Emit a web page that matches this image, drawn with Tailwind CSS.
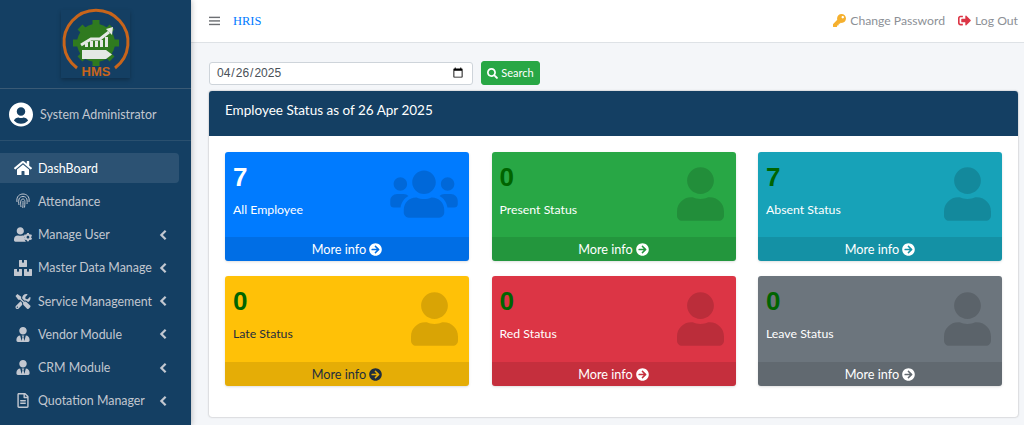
<!DOCTYPE html>
<html lang="en">

<head>
  <meta charset="UTF-8">
  <meta name="viewport" content="width=device-width, initial-scale=1.0">
  <title>HRIS</title>
  <script src="https://cdn.jsdelivr.net/npm/@tailwindcss/browser@4"></script>
</head>

<body class="bg-[#f4f6f9] text-[#212529] font-['Lato',sans-serif]">
  <!-- shared icons -->
  <svg class="hidden">
    <symbol id="i-user" viewBox="0 0 448 512"><path d="M224 256c70.7 0 128-57.3 128-128S294.7 0 224 0 96 57.3 96 128s57.3 128 128 128zm89.6 32h-16.7c-22.2 10.2-46.9 16-72.9 16s-50.6-5.8-72.9-16h-16.7C60.2 288 0 348.2 0 422.4V464c0 26.5 21.5 48 48 48h352c26.5 0 48-21.5 48-48v-41.6c0-74.2-60.2-134.4-134.4-134.4z"/></symbol>
    <symbol id="i-users" viewBox="0 0 640 512"><path d="M96 224c35.3 0 64-28.7 64-64s-28.7-64-64-64-64 28.7-64 64 28.7 64 64 64zm448 0c35.3 0 64-28.7 64-64s-28.7-64-64-64-64 28.7-64 64 28.7 64 64 64zm32 32h-64c-17.6 0-33.5 7.1-45.1 18.6 40.3 22.1 68.9 62 75.1 109.4h66c17.7 0 32-14.3 32-32v-32c0-35.3-28.7-64-64-64zm-256 0c61.9 0 112-50.1 112-112S381.9 32 320 32 208 82.1 208 144s50.1 112 112 112zm76.8 32h-8.3c-20.8 10-43.9 16-68.5 16s-47.6-6-68.5-16h-8.3C179.6 288 128 339.6 128 403.2V432c0 26.5 21.5 48 48 48h288c26.5 0 48-21.5 48-48v-28.8c0-63.6-51.6-115.2-115.2-115.2zm-223.7-13.4C161.5 263.1 145.6 256 128 256H64c-35.3 0-64 28.7-64 64v32c0 17.7 14.3 32 32 32h65.9c6.3-47.4 34.9-87.3 75.2-109.4z"/></symbol>
    <symbol id="i-arrow" viewBox="0 0 512 512"><path d="M256 8c137 0 248 111 248 248S393 504 256 504 8 393 8 256 119 8 256 8zm-28.9 143.6l75.5 72.4H120c-13.3 0-24 10.7-24 24v16c0 13.3 10.7 24 24 24h182.6l-75.5 72.4c-9.7 9.3-9.9 24.8-.4 34.3l11 10.9c9.4 9.4 24.6 9.4 33.9 0L404.3 273c9.4-9.4 9.4-24.6 0-33.9L271.6 106.3c-9.4-9.4-24.6-9.4-33.9 0l-11 10.9c-9.5 9.6-9.3 25.1.4 34.4z"/></symbol>
    <symbol id="i-tie" viewBox="0 0 448 512"><path d="M224 256c70.7 0 128-57.3 128-128S294.7 0 224 0 96 57.3 96 128s57.3 128 128 128zm95.8 32.6L272 480l-32-136 32-56h-96l32 56-32 136-47.8-191.4C56.9 292 0 350.3 0 422.4V464c0 26.5 21.5 48 48 48h352c26.5 0 48-21.5 48-48v-41.6c0-72.1-56.9-130.4-128.2-133.8z"/></symbol>
    <symbol id="i-left" viewBox="0 0 10 14"><path d="M7.5 2 L2.5 7 L7.5 12" fill="none" stroke="currentColor" stroke-width="2.6"/></symbol>
  </svg>

  <div class="flex h-[425px] overflow-hidden">
    <!-- Sidebar -->
    <aside class="w-[191px] shrink-0 bg-[#143f63] text-[#c2c7d0] text-[12.400px] shadow-[0_0_6px_rgba(0,0,0,0.3)] z-10">
      <div class="h-[89px] pt-[10px] flex justify-center border-b border-[#3a5a75]">
        <div class="w-[69px] h-[68px] shadow-[0_2px_4px_rgba(0,0,0,0.25)]">
          <svg viewBox="0 0 69 68" class="w-full h-full overflow-visible">
            <path d="M16 58 A32 32 0 1 1 54 58" fill="none" stroke="#c8651b" stroke-width="3"/>
            <g fill="#2f7a1f">
              <circle cx="35" cy="33" r="19"/>
              <path stroke="#2f7a1f" stroke-width="7" d="M35 10 V56 M12 33 H58 M19 17 L51 49 M51 17 L19 49"/>
            </g>
            <path d="M20 35 L30 29 L39 29 L48 22" fill="none" stroke="#e4e8e4" stroke-width="3"/>
            <path d="M45 19 L52 17 L51 25 Z" fill="#e4e8e4"/>
            <path d="M24 33 h3 v4 h-3 z M29 31 h3 v6 h-3 z M34 31 h3 v6 h-3 z M39 30 h3 v7 h-3 z M44 27 h3 v10 h-3 z" fill="#e4e8e4"/>
            <path d="M21 40 H45 L51 44.500 L45 49 H21 Z" fill="#e4e8e4"/>
            <text x="35" y="66" text-anchor="middle" font-family="Liberation Sans" font-weight="700" font-size="13" fill="#c8651b">HMS</text>
          </svg>
        </div>
      </div>
      <div class="h-[52px] pl-[9px] flex items-center gap-[7px] border-b border-[#2a506f]">
        <svg viewBox="0 0 496 512" class="w-[24px] h-[25px] fill-white"><path d="M248 8C111 8 0 119 0 256s111 248 248 248 248-111 248-248S385 8 248 8zm0 96c48.6 0 88 39.4 88 88s-39.4 88-88 88-88-39.4-88-88 39.4-88 88-88zm0 344c-58.7 0-111.3-26.600-146.500-68.200 18.800-35.400 55.600-59.800 98.500-59.800 2.400 0 4.800.4 7.100 1.100 13 4.200 26.600 6.900 40.900 6.900 14.300 0 28-2.700 40.900-6.900 2.300-.7 4.700-1.100 7.100-1.100 42.900 0 79.700 24.400 98.500 59.800C359.300 421.400 306.700 448 248 448z"/></svg>
        <span class="pt-[2px]">System Administrator</span>
      </div>
      <nav class="pt-[12px] flex flex-col gap-[3.250px]">
        <a class="h-[30px] w-[179px] flex items-center pl-[14px] bg-white/10 rounded-r text-white">
          <svg viewBox="0 0 576 512" class="w-[18px] h-[16px] fill-current mr-[6px]"><path d="M280.37 148.26L96 300.110V464a16 16 0 0 0 16 16l112.060-.29a16 16 0 0 0 15.920-16V368a16 16 0 0 1 16-16h64a16 16 0 0 1 16 16v95.640a16 16 0 0 0 16 16.050L464 480a16 16 0 0 0 16-16V300L295.670 148.260a12.190 12.190 0 0 0-15.300 0zM571.600 251.470L488 182.560V44.050a12 12 0 0 0-12-12h-56a12 12 0 0 0-12 12v72.610L318.470 43a48 48 0 0 0-61 0L4.340 251.470a12 12 0 0 0-1.600 16.900l25.500 31A12 12 0 0 0 45.150 301l235.220-193.740a12.190 12.190 0 0 1 15.300 0L530.900 301a12 12 0 0 0 16.900-1.600l25.500-31a12 12 0 0 0-1.700-16.930z"/></svg>
          <span class="pt-[2px]">DashBoard</span>
        </a>
        <a class="h-[30px] flex items-center pl-[14px]">
          <svg viewBox="0 0 16 16" class="w-[18px] h-[16px] mr-[6px]" fill="none" stroke="currentColor" stroke-width="1"><path d="M2 9 C1 3 5 1 8 1 C11 1 15 3 14 9 M4 12 C3 7 4 3.500 8 3.500 C12 3.500 12.500 7 12 11 M6 14 C5.500 11 5 6 8 6 C10.500 6 10 10 9.500 14.500 M8 8 C8 10 8 12 7.800 15"/></svg>
          <span class="pt-[2px]">Attendance</span>
        </a>
        <a class="h-[30px] flex items-center pl-[14px]">
          <svg viewBox="0 0 640 512" class="w-[18px] h-[15px] fill-current mr-[6px]"><path d="M224 256c70.700 0 128-57.300 128-128S294.700 0 224 0 96 57.300 96 128s57.300 128 128 128zM313.600 288h-16.700c-22.200 10.200-46.900 16-72.900 16s-50.600-5.800-72.900-16h-16.700C60.200 288 0 348.200 0 422.400V464c0 26.500 21.500 48 48 48h352c8 0 15-2 21-6-20-20-35-45-43-72-3-11 1-22 11-28l10-6v-8l-10-6c-10-6-14-17-11-28 5-17 13-33 24-47-20-14-44-23-88-23z"/><path d="M610.500 373.300c2.600-14.100 2.600-28.500 0-42.600l25.800-14.900c3-1.700 4.300-5.200 3.300-8.500-6.700-21.600-18.200-41.200-33.200-57.400-2.300-2.500-6-3.100-9-1.400l-25.800 14.900c-10.900-9.300-23.400-16.500-36.900-21.300v-29.800c0-3.400-2.400-6.400-5.700-7.100-22.300-5-45-4.800-66.200 0-3.300.7-5.700 3.700-5.700 7.100v29.800c-13.500 4.800-26 12-36.900 21.300l-25.800-14.900c-2.900-1.700-6.700-1.100-9 1.400-15 16.200-26.500 35.800-33.200 57.400-1 3.300.4 6.800 3.300 8.500l25.800 14.900c-2.600 14.100-2.600 28.500 0 42.600l-25.800 14.900c-3 1.700-4.300 5.200-3.300 8.500 6.700 21.600 18.200 41.100 33.200 57.400 2.300 2.500 6 3.100 9 1.400l25.800-14.900c10.900 9.300 23.400 16.500 36.900 21.300v29.800c0 3.400 2.400 6.400 5.700 7.100 22.300 5 45 4.800 66.200 0 3.300-.7 5.700-3.700 5.700-7.100v-29.800c13.500-4.800 26-12 36.900-21.300l25.800 14.900c2.900 1.700 6.700 1.100 9-1.400 15-16.200 26.500-35.800 33.200-57.400 1-3.300-.4-6.800-3.300-8.500l-25.800-14.900zM496 400.500c-26.800 0-48.500-21.800-48.500-48.500s21.800-48.500 48.500-48.500 48.500 21.800 48.500 48.500-21.700 48.500-48.500 48.500z"/></svg>
          <span class="flex-1 pt-[2px]">Manage User</span>
          <svg class="w-[9px] h-[12px] mr-[23px]"><use href="#i-left"/></svg>
        </a>
        <a class="h-[30px] flex items-center pl-[14px]">
          <svg viewBox="0 0 576 512" class="w-[18px] h-[16px] fill-current mr-[6px]"><path d="M560 288h-80v96l-32-21.300-32 21.300v-96h-80c-8.800 0-16 7.200-16 16v192c0 8.800 7.200 16 16 16h224c8.800 0 16-7.200 16-16V304c0-8.800-7.200-16-16-16zm-384-64h224c8.800 0 16-7.200 16-16V16c0-8.800-7.200-16-16-16h-80v96l-32-21.300L256 96V0h-80c-8.800 0-16 7.200-16 16v192c0 8.800 7.200 16 16 16zm64 64h-80v96l-32-21.300L96 384v-96H16c-8.800 0-16 7.200-16 16v192c0 8.800 7.200 16 16 16h224c8.800 0 16-7.200 16-16V304c0-8.800-7.200-16-16-16z"/></svg>
          <span class="flex-1 pt-[2px] whitespace-nowrap">Master Data Manage</span>
          <svg class="w-[9px] h-[12px] mr-[23px]"><use href="#i-left"/></svg>
        </a>
        <a class="h-[30px] flex items-center pl-[14px]">
          <svg viewBox="0 0 512 512" class="w-[18px] h-[15px] fill-current mr-[6px]"><path d="M501.100 395.700L384 278.600c-23.100-23.100-57.600-27.600-85.400-13.900L192 158.100V96L64 0 0 64l96 128h62.100l106.600 106.600c-13.600 27.800-9.200 62.300 13.900 85.400l117.100 117.100c14.600 14.600 38.200 14.600 52.700 0l52.700-52.700c14.500-14.600 14.500-38.200 0-52.700zM331.700 225c28.300 0 54.900 11 74.900 31l19.400 19.400c15.800-6.900 30.800-16.500 43.800-29.500 37.100-37.100 49.700-89.300 37.900-136.700-2.200-9-13.500-12.100-20.100-5.500l-74.400 74.400-67.900-11.300L334 98.900l74.400-74.400c6.600-6.600 3.400-17.900-5.700-20.200-47.400-11.700-99.600.9-136.600 37.900-28.500 28.500-41.900 66.100-41.200 103.600l82.100 82.100c8.100-1.900 16.500-2.900 24.700-2.900zm-103.900 82l-56.700-56.700L18.700 402.800c-25 25-25 65.500 0 90.500s65.500 25 90.500 0l123.600-123.600c-7.600-19.900-9.900-41.600-5-62.700zM64 472c-13.200 0-24-10.800-24-24 0-13.300 10.700-24 24-24s24 10.700 24 24c0 13.200-10.700 24-24 24z"/></svg>
          <span class="flex-1 pt-[2px] whitespace-nowrap">Service Management</span>
          <svg class="w-[9px] h-[12px] mr-[23px]"><use href="#i-left"/></svg>
        </a>
        <a class="h-[30px] flex items-center pl-[14px]">
          <svg class="w-[18px] h-[15px] fill-current mr-[6px]"><use href="#i-tie"/></svg>
          <span class="flex-1 pt-[2px]">Vendor Module</span>
          <svg class="w-[9px] h-[12px] mr-[23px]"><use href="#i-left"/></svg>
        </a>
        <a class="h-[30px] flex items-center pl-[14px]">
          <svg class="w-[18px] h-[15px] fill-current mr-[6px]"><use href="#i-tie"/></svg>
          <span class="flex-1 pt-[2px]">CRM Module</span>
          <svg class="w-[9px] h-[12px] mr-[23px]"><use href="#i-left"/></svg>
        </a>
        <a class="h-[30px] flex items-center pl-[14px]">
          <svg viewBox="0 0 384 512" class="w-[18px] h-[15px] fill-current mr-[6px]"><path d="M288 248v28c0 6.600-5.400 12-12 12H108c-6.600 0-12-5.400-12-12v-28c0-6.600 5.400-12 12-12h168c6.600 0 12 5.400 12 12zm-12 72H108c-6.600 0-12 5.400-12 12v28c0 6.600 5.400 12 12 12h168c6.600 0 12-5.400 12-12v-28c0-6.600-5.400-12-12-12zm108-188.100V464c0 26.500-21.500 48-48 48H48c-26.500 0-48-21.500-48-48V48C0 21.500 21.500 0 48 0h204.100C264.800 0 277 5.100 286 14.100L369.900 98c9 8.900 14.100 21.200 14.100 33.900zm-128-80V128h76.100L256 51.900zM336 464V176H232c-13.300 0-24-10.700-24-24V48H48v416h288z"/></svg>
          <span class="flex-1 pt-[2px]">Quotation Manager</span>
          <svg class="w-[9px] h-[12px] mr-[23px]"><use href="#i-left"/></svg>
        </a>
      </nav>
    </aside>

    <div class="flex-1 min-w-0 flex flex-col">
      <!-- Navbar -->
      <header class="h-[43px] shrink-0 bg-white border-b border-[#dee2e6] flex items-center pl-[18px] pr-[6px] text-[12.200px]">
        <svg viewBox="0 0 14 12" class="w-[11px] h-[10px] mr-[13px] text-[#6c6f73]" fill="currentColor"><rect y="0.500" width="14" height="1.800"/><rect y="5" width="14" height="1.800"/><rect y="9.500" width="14" height="1.800"/></svg>
        <a class="text-[#007bff] font-['Liberation_Serif',serif] text-[12.500px]">HRIS</a>
        <div class="ml-auto flex items-center text-[#8c9096]">
          <svg viewBox="0 0 512 512" class="w-[13px] h-[13px] fill-[#f5b02e] mr-[4px]"><path d="M512 176.001C512 273.203 433.202 352 336 352c-11.220 0-22.190-1.062-32.827-3.069l-24.012 27.014A23.999 23.999 0 0 1 261.223 384H224v40c0 13.255-10.745 24-24 24h-40v40c0 13.255-10.745 24-24 24H24c-13.255 0-24-10.745-24-24v-78.059c0-6.365 2.529-12.470 7.029-16.971l161.802-161.802C163.108 213.814 160 195.271 160 176 160 78.798 238.797.001 335.999 0 433.488-.001 512 78.511 512 176.001zM336 128c0 26.510 21.490 48 48 48s48-21.490 48-48-21.490-48-48-48-48 21.490-48 48z"/></svg>
          <span>Change Password</span>
          <svg viewBox="0 0 512 512" class="w-[13px] h-[13px] fill-[#dc3545] ml-[13px] mr-[4px]"><path d="M497 273L329 441c-15 15-41 4.500-41-17v-96H152c-13.300 0-24-10.700-24-24v-96c0-13.300 10.700-24 24-24h136V88c0-21.400 25.900-32 41-17l168 168c9.300 9.400 9.300 24.600 0 34zM192 436v-40c0-6.600-5.400-12-12-12H96c-17.700 0-32-14.300-32-32V160c0-17.700 14.300-32 32-32h84c6.600 0 12-5.400 12-12V76c0-6.600-5.400-12-12-12H96c-53 0-96 43-96 96v192c0 53 43 96 96 96h84c6.600 0 12-5.400 12-12z"/></svg>
          <span>Log Out</span>
        </div>
      </header>

      <main class="px-[18px] pt-[18px]">
        <!-- Search -->
        <div class="flex gap-[8px] items-center h-[24px] mb-[6px]">
          <input type="date" value="2025-04-26" class="w-[264px] h-[23px] bg-white border border-[#ced4da] rounded-[3px] px-[6px] text-[12px] text-[#495057] font-['Liberation_Sans',sans-serif]">
          <button class="w-[59px] h-[24px] bg-[#28a745] border border-[#28a745] rounded-[3px] text-white text-[11px] flex items-center justify-center gap-[3px]">
            <svg viewBox="0 0 512 512" class="w-[11px] h-[11px] fill-white"><path d="M505 442.700L405.300 343c-4.500-4.500-10.600-7-17-7H372c27.600-35.300 44-79.700 44-128C416 93.100 322.900 0 208 0S0 93.100 0 208s93.100 208 208 208c48.300 0 92.700-16.400 128-44v16.300c0 6.400 2.500 12.500 7 17l99.700 99.700c9.400 9.400 24.600 9.400 33.900 0l28.300-28.300c9.400-9.400 9.400-24.600.1-34zM208 336c-70.700 0-128-57.200-128-128 0-70.700 57.200-128 128-128 70.700 0 128 57.200 128 128 0 70.700-57.200 128-128 128z"/></svg>
            Search
          </button>
        </div>

        <!-- Status card -->
        <section class="w-[809px] h-[326px] bg-white rounded-[3px] shadow-[0_0_2px_rgba(0,0,0,0.35)] overflow-hidden">
          <div class="h-[45px] bg-[#143f63] text-white text-[13.500px] flex items-center px-[16px] pb-[6px]">Employee Status as of 26 Apr 2025</div>
          <div class="px-[16px] pt-[16px] grid grid-cols-3 gap-x-[22.500px] gap-y-[15px]">

            <div class="h-[109px] rounded-[3px] bg-[#007bff] text-white flex flex-col shadow-sm relative overflow-hidden">
              <div class="flex-1 pl-[8px] pt-[7px]">
                <div class="text-[26px] leading-[36px] font-bold font-['Liberation_Sans',sans-serif]">7</div>
                <div class="text-[12.300px] mt-[6px]">All Employee</div>
              </div>
              <svg class="absolute right-[11px] top-[15px] w-[68px] h-[54px] fill-black/15"><use href="#i-users"/></svg>
              <div class="h-[24px] pt-[1px] bg-black/10 flex items-center justify-center gap-[3px] text-[12.700px]">More info <svg class="w-[13px] h-[13px] fill-current"><use href="#i-arrow"/></svg></div>
            </div>

            <div class="h-[109px] rounded-[3px] bg-[#28a745] text-white flex flex-col shadow-sm relative overflow-hidden">
              <div class="flex-1 pl-[8px] pt-[7px]">
                <div class="text-[26px] leading-[36px] font-bold font-['Liberation_Sans',sans-serif] text-[#006400]">0</div>
                <div class="text-[12.300px] mt-[6px]">Present Status</div>
              </div>
              <svg class="absolute right-[12px] top-[15px] w-[47px] h-[54px] fill-black/15"><use href="#i-user"/></svg>
              <div class="h-[24px] pt-[1px] bg-black/10 flex items-center justify-center gap-[3px] text-[12.700px]">More info <svg class="w-[13px] h-[13px] fill-current"><use href="#i-arrow"/></svg></div>
            </div>

            <div class="h-[109px] rounded-[3px] bg-[#17a2b8] text-white flex flex-col shadow-sm relative overflow-hidden">
              <div class="flex-1 pl-[8px] pt-[7px]">
                <div class="text-[26px] leading-[36px] font-bold font-['Liberation_Sans',sans-serif] text-[#006400]">7</div>
                <div class="text-[12.300px] mt-[6px]">Absent Status</div>
              </div>
              <svg class="absolute right-[11px] top-[15px] w-[47px] h-[54px] fill-black/15"><use href="#i-user"/></svg>
              <div class="h-[24px] pt-[1px] bg-black/10 flex items-center justify-center gap-[3px] text-[12.700px]">More info <svg class="w-[13px] h-[13px] fill-current"><use href="#i-arrow"/></svg></div>
            </div>

            <div class="h-[110px] rounded-[3px] bg-[#ffc107] text-[#1f2d3d] flex flex-col shadow-sm relative overflow-hidden">
              <div class="flex-1 pl-[8px] pt-[7px]">
                <div class="text-[26px] leading-[36px] font-bold font-['Liberation_Sans',sans-serif] text-[#006400]">0</div>
                <div class="text-[12.300px] mt-[6px]">Late Status</div>
              </div>
              <svg class="absolute right-[11px] top-[16px] w-[47px] h-[54px] fill-black/15"><use href="#i-user"/></svg>
              <div class="h-[24px] pt-[1px] bg-black/10 flex items-center justify-center gap-[3px] text-[12.700px]">More info <svg class="w-[13px] h-[13px] fill-current"><use href="#i-arrow"/></svg></div>
            </div>

            <div class="h-[110px] rounded-[3px] bg-[#dc3545] text-white flex flex-col shadow-sm relative overflow-hidden">
              <div class="flex-1 pl-[8px] pt-[7px]">
                <div class="text-[26px] leading-[36px] font-bold font-['Liberation_Sans',sans-serif] text-[#006400]">0</div>
                <div class="text-[12.300px] mt-[6px]">Red Status</div>
              </div>
              <svg class="absolute right-[12px] top-[16px] w-[47px] h-[54px] fill-black/15"><use href="#i-user"/></svg>
              <div class="h-[24px] pt-[1px] bg-black/10 flex items-center justify-center gap-[3px] text-[12.700px]">More info <svg class="w-[13px] h-[13px] fill-current"><use href="#i-arrow"/></svg></div>
            </div>

            <div class="h-[110px] rounded-[3px] bg-[#6c757d] text-white flex flex-col shadow-sm relative overflow-hidden">
              <div class="flex-1 pl-[8px] pt-[7px]">
                <div class="text-[26px] leading-[36px] font-bold font-['Liberation_Sans',sans-serif] text-[#006400]">0</div>
                <div class="text-[12.300px] mt-[6px]">Leave Status</div>
              </div>
              <svg class="absolute right-[11px] top-[16px] w-[47px] h-[54px] fill-black/15"><use href="#i-user"/></svg>
              <div class="h-[24px] pt-[1px] bg-black/10 flex items-center justify-center gap-[3px] text-[12.700px]">More info <svg class="w-[13px] h-[13px] fill-current"><use href="#i-arrow"/></svg></div>
            </div>

          </div>
        </section>
      </main>
    </div>
  </div>
</body>

</html>
